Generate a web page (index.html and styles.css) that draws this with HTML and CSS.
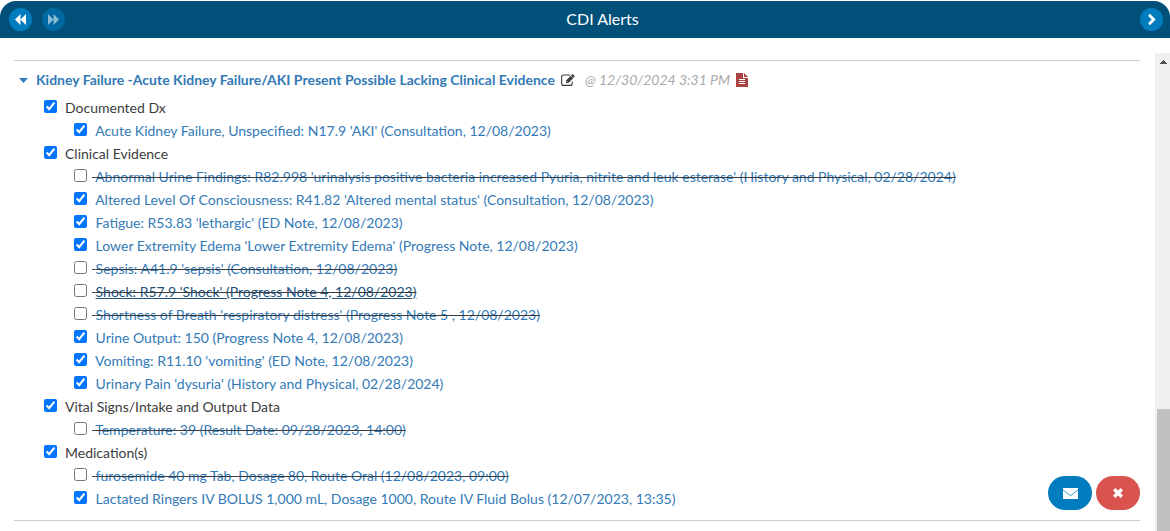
FILE: index.html
```
<!DOCTYPE html>
<html lang="en">
<head>
<meta charset="utf-8">
<title>CDI Alerts</title>
<link rel="stylesheet" href="styles.css">
</head>
<body>
<div class="panel">
  <header class="panel-header">
    <nav class="nav-group">
      <button class="nav-button" type="button" aria-label="Previous"><svg width="11" height="11" viewBox="0 0 11 11"><path fill="currentColor" d="M5.500 0v11L0 5.500zM11 0v11L5.500 5.500z"/></svg></button>
      <button class="nav-button nav-button-off" type="button" aria-label="Next" disabled><svg width="11" height="11" viewBox="0 0 11 11"><path fill="currentColor" d="M0 0l5.500 5.500L0 11zM5.500 0L11 5.500 5.500 11z"/></svg></button>
    </nav>
    <h1 class="panel-title">CDI Alerts</h1>
    <button class="nav-button" type="button" aria-label="Collapse"><svg width="9" height="13" viewBox="0 0 9 13"><path fill="none" stroke="currentColor" stroke-width="2.8" d="M2 1.800L6.700 6.500 2 11.200"/></svg></button>
  </header>
  <div class="panel-body">
    <main class="content">
      <section class="alert">
        <div class="alert-heading">
          <svg class="caret" width="9" height="5" viewBox="0 0 9 5"><path fill="currentColor" d="M0 0h9L4.500 5z"/></svg>
          <a class="alert-title" href="#">Kidney Failure -Acute Kidney Failure/AKI Present Possible Lacking Clinical Evidence</a>
          <svg class="edit-icon" width="14" height="12" viewBox="0 0 14 12"><path fill="none" stroke="currentColor" stroke-width="1.1" d="M9 1H2.600Q.6 1 .6 3v6.400q0 2 2 2h6.600q2 0 2-2V7.600"/><path fill="currentColor" d="M5 9V6.600L11 .6q.6-.6 1.200 0l1.200 1.200q.6.6 0 1.200L7.400 9z"/><path stroke="#fff" stroke-width=".7" d="M10 1.700l2.300 2.300M5.700 7.100l1.200 1.200"/></svg>
          <time class="alert-time">@ 12/30/2024 3:31 PM</time>
          <svg class="note-icon" width="12" height="14" viewBox="0 0 12 14"><path fill="currentColor" d="M0 0h7v5h5v9H0zM8 0l4 4H8z"/><path stroke="#fff" d="M3 6.500h6M3 8.500h6M3 10.500h6"/></svg>
        </div>
        <ul class="groups">
          <li>
            <div class="row"><input class="tick" type="checkbox" id="g1" checked><label class="group-label" for="g1">Documented Dx</label></div>
            <ul class="items">
              <li class="row"><input class="tick" type="checkbox" aria-labelledby="a1" checked><span class="item"> <a id="a1" href="#">Acute Kidney Failure, Unspecified: N17.9 'AKI' (Consultation, 12/08/2023)</a></span></li>
            </ul>
          </li>
          <li>
            <div class="row"><input class="tick" type="checkbox" id="g2" checked><label class="group-label" for="g2">Clinical Evidence</label></div>
            <ul class="items">
              <li class="row"><input class="tick" type="checkbox" aria-labelledby="b1"><del class="item"> <a id="b1" href="#">Abnormal Urine Findings: R82.998 'urinalysis positive bacteria increased Pyuria, nitrite and leuk esterase' (History and Physical, 02/28/2024)</a></del></li>
              <li class="row"><input class="tick" type="checkbox" aria-labelledby="b2" checked><span class="item"> <a id="b2" href="#">Altered Level Of Consciousness: R41.82 'Altered mental status' (Consultation, 12/08/2023)</a></span></li>
              <li class="row"><input class="tick" type="checkbox" aria-labelledby="b3" checked><span class="item"> <a id="b3" href="#">Fatigue: R53.83 'lethargic' (ED Note, 12/08/2023)</a></span></li>
              <li class="row"><input class="tick" type="checkbox" aria-labelledby="b4" checked><span class="item"> <a id="b4" href="#">Lower Extremity Edema 'Lower Extremity Edema' (Progress Note, 12/08/2023)</a></span></li>
              <li class="row"><input class="tick" type="checkbox" aria-labelledby="b5"><del class="item"> <a id="b5" href="#">Sepsis: A41.9 'sepsis' (Consultation, 12/08/2023)</a></del></li>
              <li class="row"><input class="tick" type="checkbox" aria-labelledby="b6"><del class="item"> <a id="b6" class="active" href="#">Shock: R57.9 'Shock' (Progress Note 4, 12/08/2023)</a></del></li>
              <li class="row"><input class="tick" type="checkbox" aria-labelledby="b7"><del class="item"> <a id="b7" href="#">Shortness of Breath 'respiratory distress' (Progress Note 5 , 12/08/2023)</a></del></li>
              <li class="row"><input class="tick" type="checkbox" aria-labelledby="b8" checked><span class="item"> <a id="b8" href="#">Urine Output: 150 (Progress Note 4, 12/08/2023)</a></span></li>
              <li class="row"><input class="tick" type="checkbox" aria-labelledby="b9" checked><span class="item"> <a id="b9" href="#">Vomiting: R11.10 'vomiting' (ED Note, 12/08/2023)</a></span></li>
              <li class="row"><input class="tick" type="checkbox" aria-labelledby="b10" checked><span class="item"> <a id="b10" href="#">Urinary Pain 'dysuria' (History and Physical, 02/28/2024)</a></span></li>
            </ul>
          </li>
          <li>
            <div class="row"><input class="tick" type="checkbox" id="g3" checked><label class="group-label" for="g3">Vital Signs/Intake and Output Data</label></div>
            <ul class="items">
              <li class="row"><input class="tick" type="checkbox" aria-labelledby="c1"><del class="item"> <a id="c1" href="#">Temperature: 39 (Result Date: 09/28/2023, 14:00)</a></del></li>
            </ul>
          </li>
          <li>
            <div class="row"><input class="tick" type="checkbox" id="g4" checked><label class="group-label" for="g4">Medication(s)</label></div>
            <ul class="items">
              <li class="row"><input class="tick" type="checkbox" aria-labelledby="d1"><del class="item"> <a id="d1" href="#">furosemide 40 mg Tab, Dosage 80, Route Oral (12/08/2023, 09:00)</a></del></li>
              <li class="row"><input class="tick" type="checkbox" aria-labelledby="d2" checked><span class="item"> <a id="d2" href="#">Lactated Ringers IV BOLUS 1,000 mL, Dosage 1000, Route IV Fluid Bolus (12/07/2023, 13:35)</a></span></li>
            </ul>
          </li>
        </ul>
      </section>
    </main>
    <div class="scrollbar" aria-hidden="true">
      <svg class="scroll-arrow" width="7" height="4" viewBox="0 0 7 4"><path fill="currentColor" d="M3 0h1v1h1v1h1v1h1v1H0V3h1V2h1V1h1z"/></svg>
      <div class="scroll-thumb"></div>
    </div>
  </div>
  <div class="actions">
    <button class="action action-mail" type="button" aria-label="Send message"><svg width="15" height="11" viewBox="0 0 15 11"><path fill="currentColor" d="M0 0h15v1.500L7.500 7.300 0 1.500zM0 2.300L7.500 8.100 15 2.300V11H0z"/></svg></button>
    <button class="action action-close" type="button" aria-label="Dismiss"><svg width="10" height="10" viewBox="0 0 10 10"><path stroke="currentColor" stroke-width="3.400" d="M1.200 1.200l7.600 7.600M8.800 1.200L1.200 8.800"/></svg></button>
  </div>
</div>
</body>
</html>
```
FILE: styles.css
```
* { box-sizing: border-box; }
body {
  margin: 0;
  background: #fff;
  color: #3c3c3c;
  font: 14px/20px Lato, "Open Sans", sans-serif;
}
a { color: #337ab7; text-decoration: none; }
a:hover, a.active { color: #23527c; text-decoration: underline; }
ul { margin: 0; padding: 0; list-style: none; }
svg { display: block; flex: none; }
button { padding: 0; border: 0; color: #fff; cursor: pointer; }

.panel {
  display: flex;
  flex-direction: column;
  height: 100vh;
  padding-top: 1px;
  overflow: hidden;
}
.panel-header {
  flex: none;
  display: flex;
  align-items: center;
  padding: 7px 7px 7px 9px;
  background: #005079;
  border-radius: 16px 16px 0 0;
}
.nav-group { display: flex; gap: 10px; }
.nav-button {
  display: flex;
  align-items: center;
  justify-content: center;
  width: 23px;
  height: 23px;
  border-radius: 50%;
  background: #007cbf;
}
.nav-button-off { background: #0069a1; color: #8cbbd6; }
.panel-title {
  flex: 1;
  margin: 0;
  color: #fff;
  font-size: 16px;
  font-weight: 400;
  line-height: 20px;
  padding-bottom: 2px;
  text-align: center;
}

.panel-body {
  flex: 1;
  min-height: 0;
  display: flex;
  gap: 15px;
  padding: 15px 0 0 14px;
}
.content { flex: 1; min-width: 0; padding-top: 7px; overflow: hidden; }
.alert {
  padding: 9px 0 11px;
  border-top: 1px solid #ccc;
  border-bottom: 1px solid #ccc;
}
.alert-heading {
  display: flex;
  align-items: center;
  height: 20px;
  margin-bottom: 5px;
  padding-left: 5px;
}
.caret { color: #337ab7; }
.alert-title { margin: 0 6px 0 8px; font-weight: 700; }
.alert-time { margin: 0 6px 0 10px; color: #aaa; font-style: italic; }
.note-icon { color: #a94442; }

.groups { padding-left: 30px; }
.items { padding-left: 30px; }
.row { display: flex; height: 23px; align-items: center; }
.tick { flex: none; width: 13px; height: 13px; margin: 0 5px 0 0; }
.group-label { padding: 2px 0 0 3px; }
.item { padding-top: 2px; white-space: pre; }

.scrollbar {
  flex: none;
  display: flex;
  flex-direction: column;
  align-items: center;
  justify-content: space-between;
  width: 15px;
  padding: 7px 0 0 2px;
  background: #f0f0f0;
}
.scroll-arrow { color: #505050; }
.scroll-thumb { width: 100%; height: 26%; background: #c1c1c1; }

.actions {
  position: fixed;
  right: 30px;
  bottom: 21px;
  display: flex;
  gap: 4px;
}
.action {
  display: flex;
  align-items: center;
  justify-content: center;
  width: 44px;
  height: 34px;
  border-radius: 17px;
}
.action-mail { background: #007cbf; }
.action-close { background: #d9534f; }
```
